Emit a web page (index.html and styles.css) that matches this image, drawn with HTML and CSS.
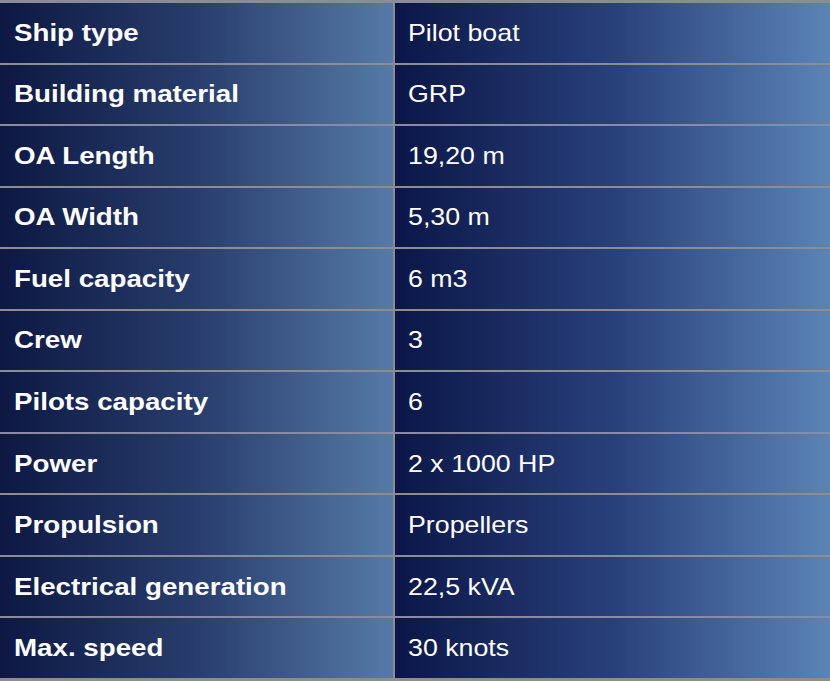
FILE: index.html
```html
<!DOCTYPE html>
<html>
<head>
<meta charset="utf-8">
<link rel="stylesheet" href="styles.css">
</head>
<body>
<div class="specs">
  <div class="cell label"><span>Ship type</span></div><div class="cell value"><span>Pilot boat</span></div>
  <div class="cell label"><span>Building material</span></div><div class="cell value"><span>GRP</span></div>
  <div class="cell label"><span>OA Length</span></div><div class="cell value"><span>19,20 m</span></div>
  <div class="cell label"><span>OA Width</span></div><div class="cell value"><span>5,30 m</span></div>
  <div class="cell label"><span>Fuel capacity</span></div><div class="cell value"><span>6 m3</span></div>
  <div class="cell label"><span>Crew</span></div><div class="cell value"><span>3</span></div>
  <div class="cell label"><span>Pilots capacity</span></div><div class="cell value"><span>6</span></div>
  <div class="cell label"><span>Power</span></div><div class="cell value"><span>2 x 1000 HP</span></div>
  <div class="cell label"><span>Propulsion</span></div><div class="cell value"><span>Propellers</span></div>
  <div class="cell label"><span>Electrical generation</span></div><div class="cell value"><span>22,5 kVA</span></div>
  <div class="cell label"><span>Max. speed</span></div><div class="cell value"><span>30 knots</span></div>
</div>
</body>
</html>
```
FILE: styles.css
```css
html, body {
  margin: 0;
  padding: 0;
  background: #8c8d92;
}
.specs {
  display: grid;
  grid-template-columns: 393px 1fr;
  grid-template-rows: repeat(11, 1fr);
  column-gap: 2px;
  row-gap: 2px;
  height: 681px;
  box-sizing: border-box;
  padding: 3px 0 3px 0;
  background: #8c8d92;
  font-family: "Liberation Sans", Arial, sans-serif;
  color: #ffffff;
}
.cell {
  display: flex;
  align-items: center;
  overflow: hidden;
  white-space: nowrap;
}
.cell span {
  display: inline-block;
  transform-origin: left center;
  font-size: 24px;
}
.label {
  padding-left: 14px;
  background: linear-gradient(to right, #0d1843, #283d6c 50%, #567aa6);
  font-weight: bold;
}
.label span {
  transform: scaleX(1.155);
}
.value {
  padding-left: 13px;
  background: linear-gradient(to right, #0b1647, #28407a 50%, #5b84b5);
}
.value span {
  transform: scaleX(1.115);
}
```
